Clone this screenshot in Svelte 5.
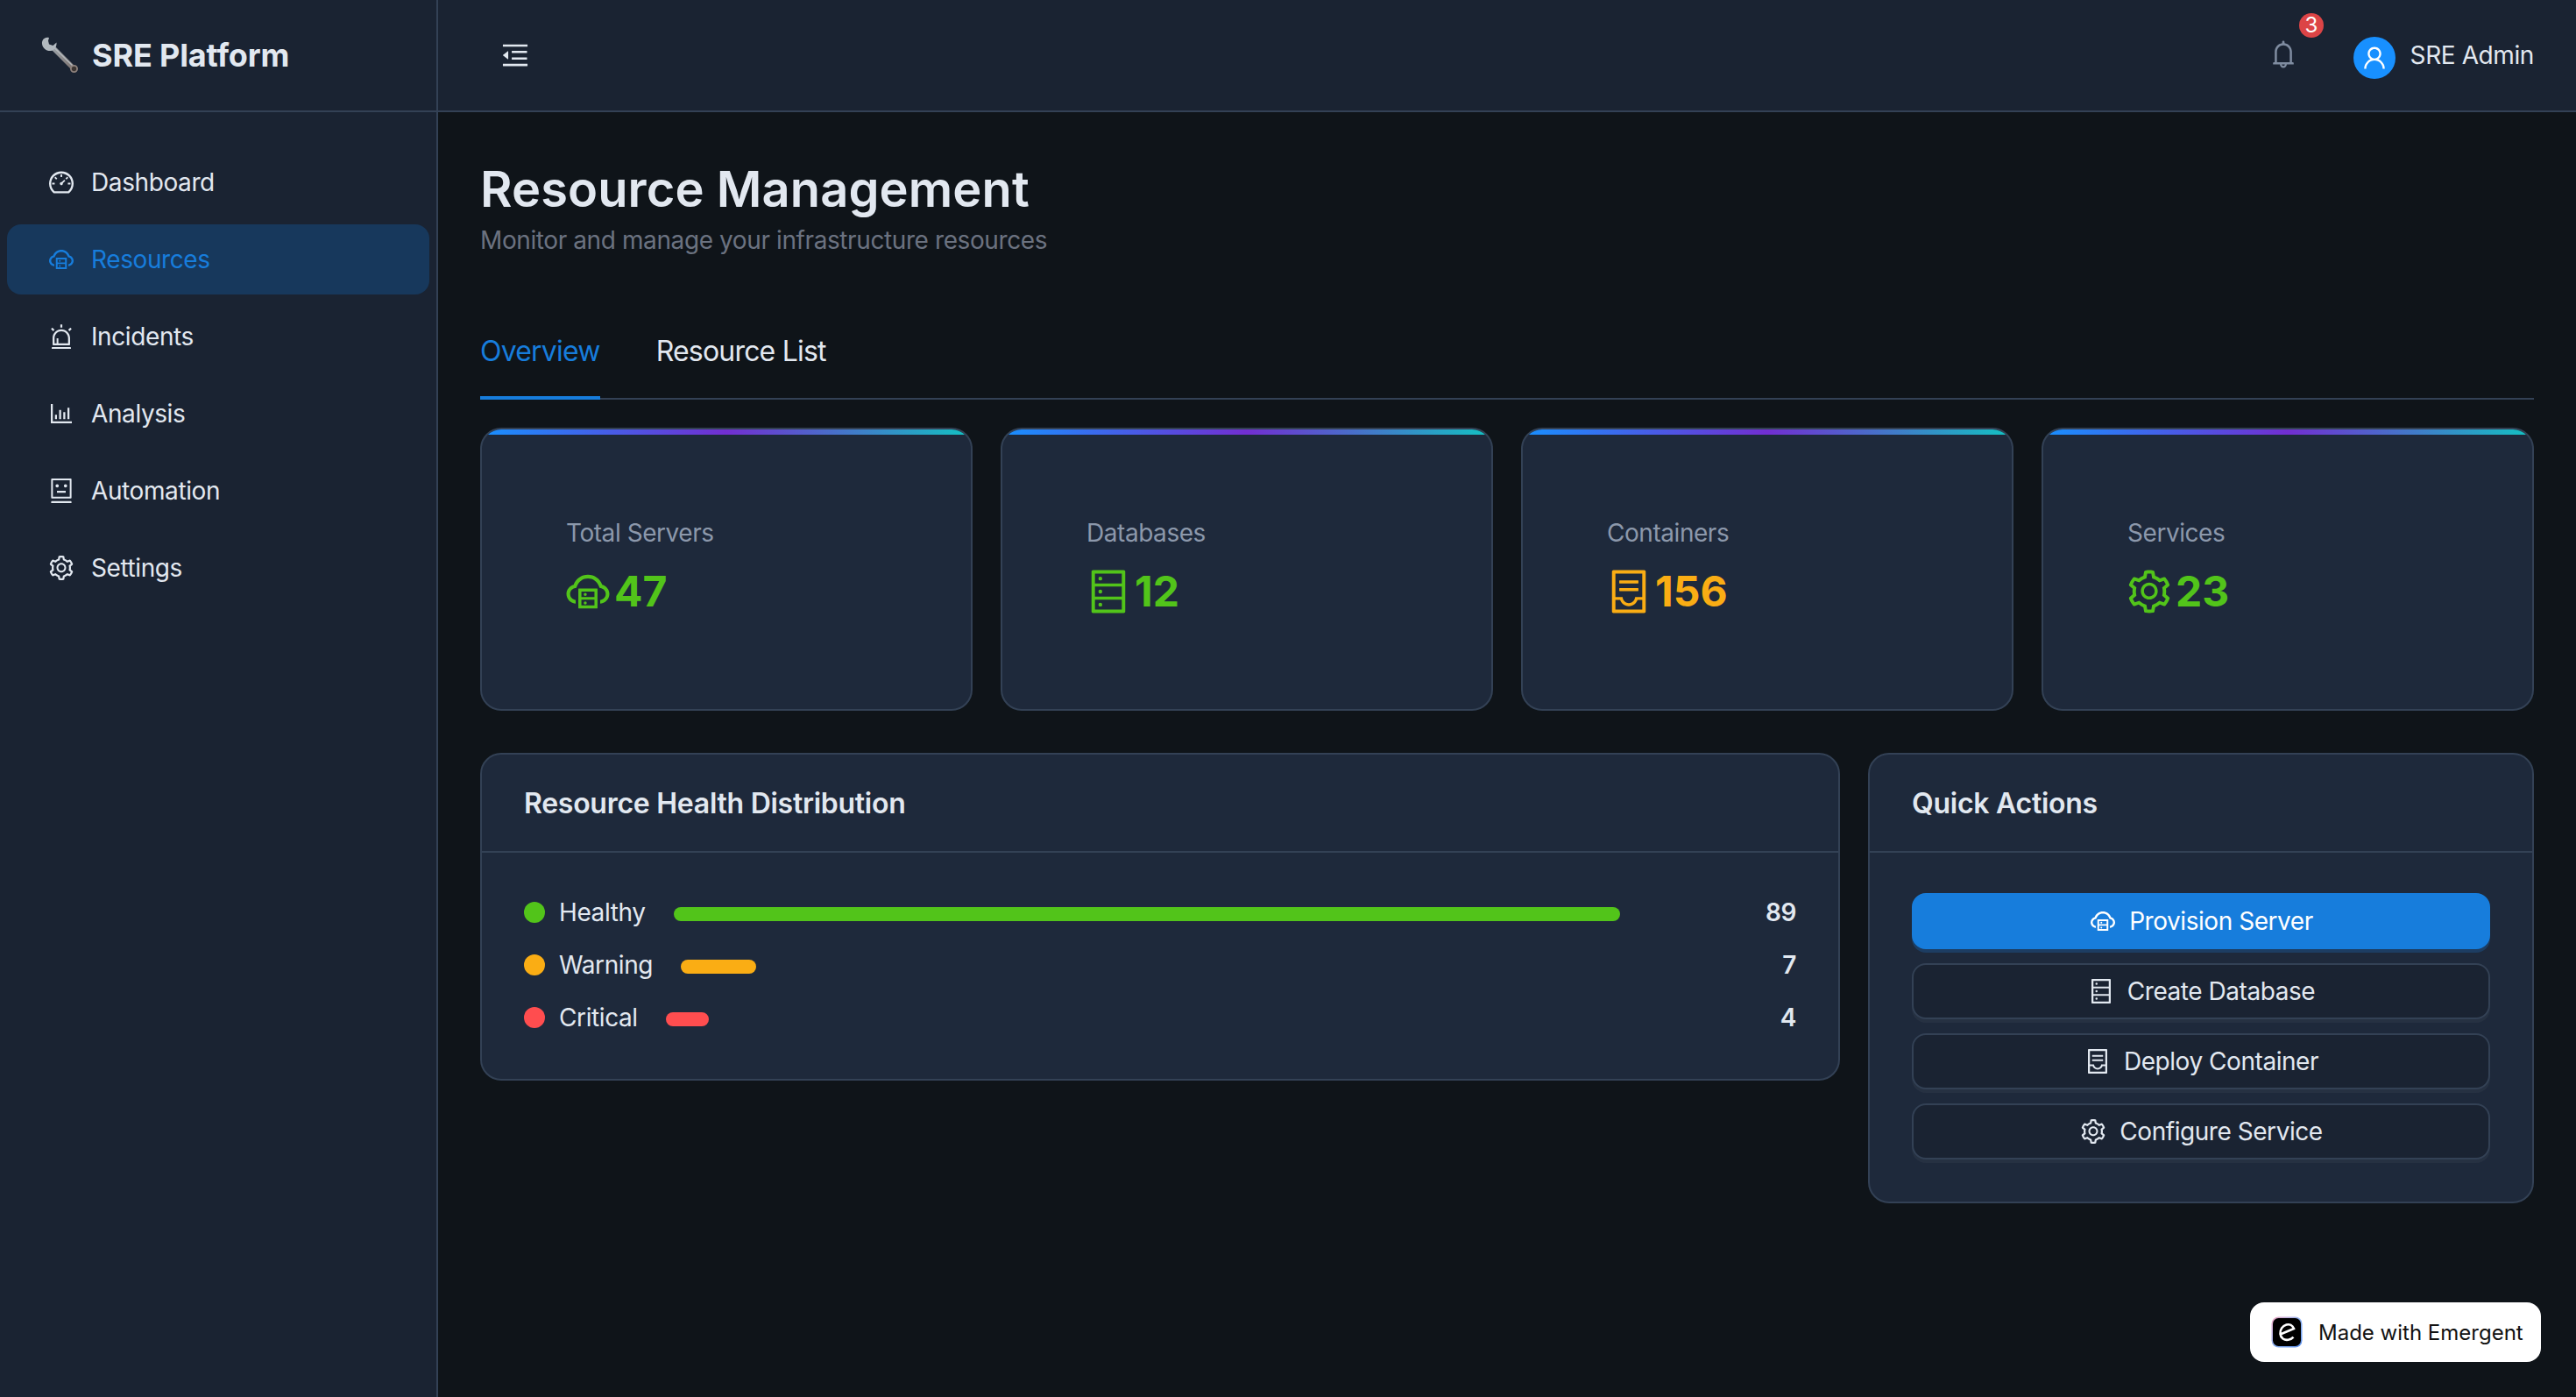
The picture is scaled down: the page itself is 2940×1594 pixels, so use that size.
<script lang="ts">
  const icons: Record<string, string> = {
    dashboard: 'M924.8 385.6a446.7 446.7 0 00-96-142.4 446.7 446.7 0 00-142.4-96C631.1 123.8 572.5 112 512 112s-119.1 11.8-174.4 35.2a446.7 446.7 0 00-142.4 96 446.7 446.7 0 00-96 142.4C75.8 440.9 64 499.5 64 560c0 132.7 58.3 257.7 159.9 343.1l1.7 1.4c5.8 4.8 13.1 7.5 20.6 7.5h531.7c7.5 0 14.8-2.7 20.6-7.5l1.7-1.4C901.7 817.7 960 692.7 960 560c0-60.5-11.9-119.1-35.2-174.4zM761.4 836H262.6A371.12 371.12 0 01140 560c0-99.4 38.7-192.8 109-263 70.3-70.3 163.7-109 263-109 99.4 0 192.8 38.7 263 109 70.3 70.3 109 163.7 109 263 0 105.6-44.5 205.5-122.6 276zM623.5 421.5a8.03 8.03 0 00-11.3 0L527.7 506c-18.7-5-39.4-.2-54.1 14.5a55.95 55.95 0 000 79.2 55.95 55.95 0 0079.2 0 55.87 55.87 0 0014.5-54.1l84.5-84.5c3.1-3.1 3.1-8.2 0-11.3l-28.3-28.3zM490 320h44c4.4 0 8-3.6 8-8v-80c0-4.4-3.6-8-8-8h-44c-4.4 0-8 3.6-8 8v80c0 4.4 3.6 8 8 8zm260 218v44c0 4.4 3.6 8 8 8h80c4.4 0 8-3.6 8-8v-44c0-4.4-3.6-8-8-8h-80c-4.4 0-8 3.6-8 8zm12.7-197.2l-31.1-31.1a8.03 8.03 0 00-11.3 0l-56.6 56.6a8.03 8.03 0 000 11.3l31.1 31.1c3.1 3.1 8.2 3.1 11.3 0l56.6-56.6c3.1-3.1 3.1-8.2 0-11.3zm-458.6-31.1a8.03 8.03 0 00-11.3 0l-31.1 31.1a8.03 8.03 0 000 11.3l56.6 56.6c3.1 3.1 8.2 3.1 11.3 0l31.1-31.1c3.1-3.1 3.1-8.2 0-11.3l-56.6-56.6zM262 530h-80c-4.4 0-8 3.6-8 8v44c0 4.4 3.6 8 8 8h80c4.4 0 8-3.6 8-8v-44c0-4.4-3.6-8-8-8z',
    cloud: 'M704 446H320c-4.4 0-8 3.6-8 8v402c0 4.4 3.6 8 8 8h384c4.4 0 8-3.6 8-8V454c0-4.4-3.6-8-8-8zm-328 64h272v117H376V510zm272 290H376V683h272v117zM424 748a32 32 0 1064 0 32 32 0 10-64 0zm0-178a32 32 0 1064 0 32 32 0 10-64 0zM811.4 368.9C765.6 248 648.9 162 512.2 162S258.8 247.9 213 368.8C126.9 391.5 63.5 470.2 64 563.6 64.6 668 145.6 752.9 247.6 762c4.7.4 8.7-3.3 8.7-8v-60.4c0-4-3-7.4-7-7.9-27-3.4-52.5-15.2-72.1-34.5-24-23.5-37.2-55.1-37.2-88.6 0-28 9.1-54.4 26.2-76.4 16.7-21.4 40.2-36.9 66.1-43.7l37.9-10 13.9-36.7c8.6-22.8 20.6-44.2 35.7-63.5 14.9-19.2 32.6-36 52.4-50 41.1-28.9 89.5-44.2 140-44.2s98.9 15.3 140 44.3c19.9 14 37.5 30.8 52.4 50 15.1 19.3 27.1 40.7 35.7 63.5l13.8 36.6 37.8 10c54.2 14.4 92.1 63.7 92.1 120 0 33.6-13.2 65.1-37.2 88.6-19.5 19.2-44.9 31.1-71.9 34.5-4 .5-6.9 3.9-6.9 7.9V754c0 4.7 4.1 8.4 8.8 8 101.7-9.2 182.5-94 183.2-198.2.6-93.4-62.7-172.1-148.6-194.9z',
    alert: 'M193 796c0 17.7 14.3 32 32 32h574c17.7 0 32-14.3 32-32V563c0-176.2-142.8-319-319-319S193 386.8 193 563v233zm72-233c0-136.4 110.6-247 247-247s247 110.6 247 247v193H404V585c0-5.5-4.5-10-10-10h-44c-5.5 0-10 4.5-10 10v171h-75V563zm-48.1-252.5l39.6-39.6c3.1-3.1 3.1-8.2 0-11.3l-67.9-67.9a8.03 8.03 0 00-11.3 0l-39.6 39.6a8.03 8.03 0 000 11.3l67.9 67.9c3.1 3.1 8.1 3.1 11.3 0zm669.6-79.2l-39.6-39.6a8.03 8.03 0 00-11.3 0l-67.9 67.9a8.03 8.03 0 000 11.3l39.6 39.6c3.1 3.1 8.2 3.1 11.3 0l67.9-67.9c3.1-3.2 3.1-8.2 0-11.3zM832 892H192c-17.7 0-32 14.3-32 32v24c0 4.4 3.6 8 8 8h688c4.4 0 8-3.6 8-8v-24c0-17.7-14.3-32-32-32zM484 180h56c4.4 0 8-3.6 8-8V76c0-4.4-3.6-8-8-8h-56c-4.4 0-8 3.6-8 8v96c0 4.4 3.6 8 8 8z',
    chart: 'M888 792H200V168c0-4.4-3.6-8-8-8h-56c-4.4 0-8 3.6-8 8v688c0 4.4 3.6 8 8 8h752c4.4 0 8-3.6 8-8v-56c0-4.4-3.6-8-8-8zm-600-80h56c4.4 0 8-3.6 8-8V560c0-4.4-3.6-8-8-8h-56c-4.4 0-8 3.6-8 8v144c0 4.4 3.6 8 8 8zm152 0h56c4.4 0 8-3.6 8-8V384c0-4.4-3.6-8-8-8h-56c-4.4 0-8 3.6-8 8v320c0 4.4 3.6 8 8 8zm152 0h56c4.4 0 8-3.6 8-8V462c0-4.4-3.6-8-8-8h-56c-4.4 0-8 3.6-8 8v242c0 4.4 3.6 8 8 8zm152 0h56c4.4 0 8-3.6 8-8V304c0-4.4-3.6-8-8-8h-56c-4.4 0-8 3.6-8 8v400c0 4.4 3.6 8 8 8z',
    robot: 'M300 328a60 60 0 10120 0 60 60 0 10-120 0zM852 64H172c-17.7 0-32 14.3-32 32v660c0 17.7 14.3 32 32 32h680c17.7 0 32-14.3 32-32V96c0-17.7-14.3-32-32-32zm-32 660H204V128h616v596zM604 328a60 60 0 10120 0 60 60 0 10-120 0zm250.2 556H169.8c-16.5 0-29.8 14.3-29.8 32v36c0 4.4 3.3 8 7.4 8h729.1c4.1 0 7.4-3.6 7.4-8v-36c.1-17.7-13.2-32-29.7-32zM664 508H360c-4.4 0-8 3.6-8 8v60c0 4.4 3.6 8 8 8h304c4.4 0 8-3.6 8-8v-60c0-4.4-3.6-8-8-8z',
    setting: 'M924.8 625.7l-65.5-56c3.1-19 4.7-38.4 4.7-57.8s-1.6-38.8-4.7-57.8l65.5-56a32.03 32.03 0 009.3-35.2l-.9-2.6a443.74 443.74 0 00-79.7-137.9l-1.8-2.1a32.12 32.12 0 00-35.1-9.5l-81.3 28.9c-30-24.6-63.5-44-99.7-57.6l-15.7-85a32.05 32.05 0 00-25.8-25.7l-2.7-.5c-52.1-9.4-106.9-9.4-159 0l-2.7.5a32.05 32.05 0 00-25.8 25.7l-15.8 85.4a351.86 351.86 0 00-99 57.4l-81.9-29.1a32 32 0 00-35.1 9.5l-1.8 2.1a446.02 446.02 0 00-79.7 137.9l-.9 2.6c-4.5 12.5-.8 26.5 9.3 35.2l66.3 56.6c-3.1 18.8-4.6 38-4.6 57.1 0 19.2 1.5 38.4 4.6 57.1L99 625.5a32.03 32.03 0 00-9.3 35.2l.9 2.6c18.1 50.4 44.9 96.9 79.7 137.9l1.8 2.1a32.12 32.12 0 0035.1 9.5l81.9-29.1c29.8 24.5 63.1 43.9 99 57.4l15.8 85.4a32.05 32.05 0 0025.8 25.7l2.7.5a449.4 449.4 0 00159 0l2.7-.5a32.05 32.05 0 0025.8-25.7l15.7-85a350 350 0 0099.7-57.6l81.3 28.9a32 32 0 0035.1-9.5l1.8-2.1c34.8-41.1 61.6-87.5 79.7-137.9l.9-2.6c4.5-12.3.8-26.3-9.3-35zM788.3 465.9c2.5 15.1 3.8 30.6 3.8 46.1s-1.3 31-3.8 46.1l-6.6 40.1 74.7 63.9a370.03 370.03 0 01-42.6 73.6L721 702.8l-31.4 25.8c-23.9 19.6-50.5 35-79.3 45.8l-38.1 14.3-17.9 97a377.5 377.5 0 01-85 0l-17.9-97.2-37.8-14.5c-28.5-10.8-55-26.2-78.7-45.7l-31.4-25.9-93.4 33.2c-17-22.9-31.2-47.6-42.6-73.6l75.5-64.5-6.5-40c-2.4-14.9-3.7-30.3-3.7-45.5 0-15.3 1.2-30.6 3.7-45.5l6.5-40-75.5-64.5c11.3-26.1 25.6-50.7 42.6-73.6l93.4 33.2 31.4-25.9c23.7-19.5 50.2-34.9 78.7-45.7l37.9-14.3 17.9-97.2c28.1-3.2 56.8-3.2 85 0l17.9 97 38.1 14.3c28.7 10.8 55.4 26.2 79.3 45.8l31.4 25.8 92.8-32.9c17 22.9 31.2 47.6 42.6 73.6L781.8 426l6.5 39.9zM512 326c-97.2 0-176 78.8-176 176s78.8 176 176 176 176-78.8 176-176-78.8-176-176-176zm79.2 255.2A111.6 111.6 0 01512 614c-29.9 0-58-11.7-79.2-32.8A111.6 111.6 0 01400 502c0-29.9 11.7-58 32.8-79.2C454 401.6 482.1 390 512 390c29.9 0 58 11.6 79.2 32.8A111.6 111.6 0 01624 502c0 29.9-11.7 58-32.8 79.2z',
    database: 'M832 64H192c-17.7 0-32 14.3-32 32v832c0 17.7 14.3 32 32 32h640c17.7 0 32-14.3 32-32V96c0-17.7-14.3-32-32-32zm-600 72h560v208H232V136zm560 480H232V408h560v208zm0 272H232V680h560v208zM304 240a40 40 0 1080 0 40 40 0 10-80 0zm0 272a40 40 0 1080 0 40 40 0 10-80 0zm0 272a40 40 0 1080 0 40 40 0 10-80 0z',
    container: 'M832 64H192c-17.7 0-32 14.3-32 32v832c0 17.7 14.3 32 32 32h640c17.7 0 32-14.3 32-32V96c0-17.7-14.3-32-32-32zm-40 824H232V687h97.9c11.6 32.8 32 62.3 59.1 84.7 34.5 28.5 78.2 44.3 123 44.3s88.5-15.7 123-44.3c27.1-22.4 47.5-51.9 59.1-84.7H792v-63H643.6l-5.2 24.7C626.4 708.5 573.2 752 512 752s-114.4-43.5-126.5-103.3l-5.2-24.7H232V136h560v752zM320 341h384c4.4 0 8-3.6 8-8v-48c0-4.4-3.6-8-8-8H320c-4.4 0-8 3.6-8 8v48c0 4.4 3.6 8 8 8zm0 160h384c4.4 0 8-3.6 8-8v-48c0-4.4-3.6-8-8-8H320c-4.4 0-8 3.6-8 8v48c0 4.4 3.6 8 8 8z',
    fold: 'M408 442h480c4.4 0 8-3.6 8-8v-56c0-4.4-3.6-8-8-8H408c-4.4 0-8 3.6-8 8v56c0 4.4 3.6 8 8 8zm-8 204c0 4.4 3.6 8 8 8h480c4.4 0 8-3.6 8-8v-56c0-4.4-3.6-8-8-8H408c-4.4 0-8 3.6-8 8v56zm504-486H120c-4.4 0-8 3.6-8 8v56c0 4.4 3.6 8 8 8h784c4.4 0 8-3.6 8-8v-56c0-4.4-3.6-8-8-8zm0 632H120c-4.4 0-8 3.6-8 8v56c0 4.4 3.6 8 8 8h784c4.4 0 8-3.6 8-8v-56c0-4.4-3.6-8-8-8zM115.4 518.9L271.7 642c5.8 4.6 14.4.5 14.4-6.9V388.9c0-7.4-8.5-11.5-14.4-6.9L115.4 505.1a8.74 8.74 0 000 13.8z',
    bell: 'M816 768h-24V428c0-141.1-104.3-257.7-240-277.1V112c0-22.1-17.9-40-40-40s-40 17.9-40 40v38.9c-135.7 19.4-240 136-240 277.1v340h-24c-17.7 0-32 14.3-32 32v32c0 4.4 3.6 8 8 8h216c0 61.8 50.2 112 112 112s112-50.2 112-112h216c4.4 0 8-3.6 8-8v-32c0-17.7-14.3-32-32-32zM512 888c-26.5 0-48-21.5-48-48h96c0 26.5-21.5 48-48 48zM304 768V428c0-55.6 21.6-107.8 60.9-147.1S456.4 220 512 220c55.6 0 107.8 21.6 147.1 60.9S720 372.4 720 428v340H304z',
    user: 'M858.5 763.6a374 374 0 00-80.6-119.5 375.63 375.63 0 00-119.5-80.6c-.4-.2-.8-.3-1.2-.5C719.5 518 760 444.7 760 362c0-137-111-248-248-248S264 225 264 362c0 82.7 40.5 156 102.8 201.1-.4.2-.8.3-1.2.5-44.8 18.9-85 46-119.5 80.6a375.63 375.63 0 00-80.6 119.5A371.7 371.7 0 00136 901.8a8 8 0 008 8.2h60c4.4 0 7.9-3.5 8-7.8 2-77.2 33-149.5 87.8-204.3 56.7-56.7 132-87.9 212.2-87.9s155.5 31.2 212.2 87.9C779 752.7 810 825 812 902.2c.1 4.4 3.6 7.8 8 7.8h60a8 8 0 008-8.2c-1-47.8-10.9-94.3-29.5-138.2zM512 534c-45.9 0-89.1-17.9-121.6-50.4S340 407.9 340 362c0-45.9 17.9-89.1 50.4-121.6S466.1 190 512 190s89.1 17.9 121.6 50.4S684 316.1 684 362c0 45.9-17.9 89.1-50.4 121.6S557.9 534 512 534z'
  };

  const navItems = [
    { label: 'Dashboard', icon: 'dashboard' },
    { label: 'Resources', icon: 'cloud', active: true },
    { label: 'Incidents', icon: 'alert' },
    { label: 'Analysis', icon: 'chart' },
    { label: 'Automation', icon: 'robot' },
    { label: 'Settings', icon: 'setting' }
  ];

  const stats = [
    { label: 'Total Servers', value: 47, icon: 'cloud', color: '#52c41a' },
    { label: 'Databases', value: 12, icon: 'database', color: '#52c41a' },
    { label: 'Containers', value: 156, icon: 'container', color: '#faad14' },
    { label: 'Services', value: 23, icon: 'setting', color: '#52c41a' }
  ];

  const health = [
    { label: 'Healthy', value: 89, color: '#52c41a' },
    { label: 'Warning', value: 7, color: '#faad14' },
    { label: 'Critical', value: 4, color: '#ff4d4f' }
  ];

  const actions = [
    { label: 'Provision Server', icon: 'cloud', primary: true },
    { label: 'Create Database', icon: 'database' },
    { label: 'Deploy Container', icon: 'container' },
    { label: 'Configure Service', icon: 'setting' }
  ];
</script>

{#snippet icon(name: string, size: number)}
  <svg class="icon" viewBox="0 0 1024 1024" width={size} height={size} fill="currentColor" aria-hidden="true">
    <path d={icons[name]} />
  </svg>
{/snippet}

<div class="layout">
  <aside class="sidebar">
    <div class="logo">
      <svg class="wrench" viewBox="0 0 56 56" width="56" height="56" aria-hidden="true">
        <defs>
          <linearGradient id="shaft" x1="0" y1="0" x2="1" y2="1">
            <stop offset="0" stop-color="#9aa0a6" />
            <stop offset="1" stop-color="#7d7370" />
          </linearGradient>
        </defs>
        <path d="M21 20 L44 43" stroke="url(#shaft)" stroke-width="5.6" stroke-linecap="round" />
        <path d="M22 19.4 L44 41" stroke="#b4b9bd" stroke-width="1.4" stroke-linecap="round" />
        <path d="M16 8 C10.5 6.5 7.5 11 8 15 C8.5 20 13 23.5 18 23 C22 22.5 25 18.5 24.5 13.5 L20.5 17 L16 15.5 L15 11.5 Z" fill="#b2b9bf" />
        <circle cx="44.5" cy="43.5" r="3.6" fill="#3c3532" stroke="#8d817c" stroke-width="1.8" />
      </svg>
      <span>SRE Platform</span>
    </div>
    <nav class="menu">
      {#each navItems as item}
        <a class="menu-item" class:active={item.active} href="#top">
          {@render icon(item.icon, 32)}
          <span>{item.label}</span>
        </a>
      {/each}
    </nav>
  </aside>

  <div class="main">
    <header class="topbar">
      <button class="trigger" type="button" aria-label="Collapse menu">
        {@render icon('fold', 36)}
      </button>
      <div class="topbar-right">
        <div class="bell">
          {@render icon('bell', 36)}
          <span class="badge">3</span>
        </div>
        <div class="user">
          <span class="avatar">{@render icon('user', 32)}</span>
          <span>SRE Admin</span>
        </div>
      </div>
    </header>

    <main class="content">
      <h1>Resource Management</h1>
      <p class="subtitle">Monitor and manage your infrastructure resources</p>

      <div class="tabs">
        <span class="tab current">Overview</span>
        <span class="tab">Resource List</span>
      </div>

      <section class="stat-grid">
        {#each stats as stat}
          <article class="stat-card">
            <div class="stat-label">{stat.label}</div>
            <div class="stat-value" style:color={stat.color}>
              {@render icon(stat.icon, 56)}
              <span>{stat.value}</span>
            </div>
          </article>
        {/each}
      </section>

      <section class="lower">
        <article class="panel">
          <h2 class="panel-head">Resource Health Distribution</h2>
          <div class="health-body">
            {#each health as row}
              <div class="health-row">
                <div class="health-name">
                  <span class="dot" style:background={row.color}></span>
                  <span>{row.label}</span>
                </div>
                <div class="track">
                  <div class="fill" style:width="{row.value}%" style:background={row.color}></div>
                </div>
                <strong>{row.value}</strong>
              </div>
            {/each}
          </div>
        </article>

        <article class="panel">
          <h2 class="panel-head">Quick Actions</h2>
          <div class="action-body">
            {#each actions as action}
              <button class="action" class:primary={action.primary} type="button">
                {@render icon(action.icon, 32)}
                <span>{action.label}</span>
              </button>
            {/each}
          </div>
        </article>
      </section>
    </main>
  </div>
</div>

<div class="made-with">
  <svg class="emergent" viewBox="0 0 36 36" width="36" height="36" aria-hidden="true">
    <defs>
      <linearGradient id="edge" x1="0" y1="0" x2="1" y2="1">
        <stop offset="0" stop-color="#f3a6c0" />
        <stop offset="0.5" stop-color="#8fb4f2" />
        <stop offset="1" stop-color="#5f93ee" />
      </linearGradient>
    </defs>
    <rect x="0.5" y="0.5" width="35" height="35" rx="8" fill="url(#edge)" />
    <rect x="2" y="2" width="32" height="32" rx="6.5" fill="#000" />
    <path d="M10.5 20.5 L26 14 C24.5 10 21 8.5 17.5 9.5 C13 10.8 10 15 10.5 20 C11 25 15 27.5 19.5 26.8 C22 26.4 24 25.3 25.5 23.6" fill="none" stroke="#fff" stroke-width="2.6" />
  </svg>
  <span>Made with Emergent</span>
</div>

<style>
  :global(body) {
    margin: 0;
    background: #0f1419;
    font-family: Inter, 'Noto Sans', sans-serif;
  }

  .layout {
    display: flex;
    min-height: 1594px;
    color: #e2e8f0;
    letter-spacing: -0.4px;
  }

  .icon {
    display: block;
    flex: 0 0 auto;
  }

  .sidebar {
    flex: 0 0 500px;
    box-sizing: border-box;
    background: #1a2332;
    border-right: 2px solid #334155;
  }

  .logo {
    display: flex;
    align-items: center;
    gap: 9px;
    box-sizing: border-box;
    height: 128px;
    padding-left: 40px;
    border-bottom: 2px solid #334155;
    font-size: 36px;
    font-weight: 700;
    letter-spacing: -0.15px;
  }

  .menu {
    display: flex;
    flex-direction: column;
    gap: 8px;
    padding: 40px 8px 0;
  }

  .menu-item {
    display: flex;
    align-items: center;
    gap: 18px;
    height: 80px;
    padding-left: 46px;
    border-radius: 16px;
    color: #e2e8f0;
    font-size: 28px;
    text-decoration: none;
  }

  .menu-item.active {
    background: #17385c;
    color: #177ddc;
  }

  .main {
    flex: 1;
    min-width: 0;
  }

  .topbar {
    display: flex;
    align-items: center;
    justify-content: space-between;
    box-sizing: border-box;
    height: 128px;
    padding: 0 48px 0 70px;
    background: #1a2332;
    border-bottom: 2px solid #334155;
  }

  .trigger {
    padding: 0;
    border: 0;
    background: none;
    color: #e2e8f0;
  }

  .topbar-right {
    display: flex;
    align-items: center;
    gap: 62px;
  }

  .bell {
    position: relative;
    margin-bottom: 2px;
    color: #7f8ca0;
  }

  .badge {
    position: absolute;
    top: -29px;
    left: 36px;
    width: 28px;
    height: 28px;
    border-radius: 50%;
    background: #dc4446;
    color: #fff;
    font-size: 24px;
    line-height: 28px;
    text-align: center;
  }

  .user {
    display: flex;
    align-items: center;
    gap: 17px;
    font-size: 28px;
  }

  .avatar {
    display: flex;
    align-items: center;
    justify-content: center;
    width: 48px;
    height: 48px;
    margin-top: 6px;
    border-radius: 50%;
    background: #1890ff;
    color: #fff;
  }

  .content {
    padding: 48px;
  }

  h1 {
    margin: 0;
    font-size: 56px;
    font-weight: 600;
    line-height: 80px;
    letter-spacing: 0.1px;
  }

  .subtitle {
    margin: -4px 0 0;
    color: #6b7280;
    font-size: 28px;
    line-height: 44px;
  }

  .tabs {
    display: flex;
    gap: 64px;
    margin-top: 61px;
    border-bottom: 2px solid #334155;
  }

  .tab {
    margin-bottom: -2px;
    padding: 24px 0 31px;
    border-bottom: 4px solid transparent;
    color: #e2e8f0;
    font-size: 32px;
    line-height: 40px;
    letter-spacing: -0.8px;
  }

  .tab.current {
    color: #177ddc;
    border-bottom-color: #177ddc;
  }

  .stat-grid {
    display: grid;
    grid-template-columns: repeat(4, 1fr);
    gap: 32px;
    margin-top: 32px;
  }

  .stat-card {
    position: relative;
    box-sizing: border-box;
    height: 323px;
    padding: 96px 0 0 96px;
    overflow: hidden;
    background: #1e293b;
    border: 2px solid #334155;
    border-radius: 24px;
  }

  .stat-card::before {
    content: '';
    position: absolute;
    top: 0;
    left: 0;
    right: 0;
    height: 6px;
    background: linear-gradient(90deg, #1890ff, #722ed1, #13c2c2);
  }

  .stat-label {
    color: #8c98ab;
    font-size: 28px;
    line-height: 44px;
    letter-spacing: -0.45px;
  }

  .stat-value {
    display: flex;
    align-items: center;
    gap: 2px;
    margin: 17px 0 0 -3px;
    font-size: 48px;
    font-weight: 700;
    line-height: 56px;
    letter-spacing: 0;
  }

  .lower {
    display: grid;
    grid-template-columns: 1552px 760px;
    gap: 32px;
    align-items: start;
    margin-top: 48px;
  }

  .panel {
    background: #1e293b;
    border: 2px solid #334155;
    border-radius: 24px;
  }

  .panel-head {
    box-sizing: border-box;
    height: 112px;
    margin: 0;
    padding: 0 48px;
    border-bottom: 2px solid #334155;
    font-size: 32px;
    font-weight: 600;
    line-height: 112px;
    letter-spacing: -0.27px;
  }

  .health-body {
    display: flex;
    flex-direction: column;
    gap: 16px;
    padding: 46px 48px 48px;
  }

  .health-row {
    display: flex;
    align-items: center;
    gap: 32px;
    height: 44px;
    font-size: 28px;
  }

  .health-row strong {
    font-weight: 600;
  }

  .health-name {
    display: flex;
    align-items: center;
    gap: 16px;
  }

  .dot {
    width: 24px;
    height: 24px;
    border-radius: 50%;
  }

  .track {
    flex: 1;
    margin-top: 4px;
  }

  .fill {
    height: 16px;
    border-radius: 8px;
  }

  .action-body {
    display: flex;
    flex-direction: column;
    gap: 16px;
    padding: 46px 48px 48px;
  }

  .action {
    display: flex;
    align-items: center;
    justify-content: center;
    gap: 14px;
    box-sizing: border-box;
    height: 64px;
    border: 2px solid #334155;
    border-radius: 16px;
    background: #1a2332;
    box-shadow: 0 4px 0 rgba(255, 255, 255, 0.04);
    color: #e2e8f0;
    font-family: inherit;
    font-size: 28px;
    letter-spacing: -0.45px;
  }

  .action.primary {
    border-color: #177ddc;
    background: #177ddc;
    box-shadow: 0 4px 0 rgba(24, 144, 255, 0.2);
    color: #fff;
  }

  .made-with {
    position: fixed;
    right: 40px;
    bottom: 40px;
    display: flex;
    align-items: center;
    gap: 18px;
    box-sizing: border-box;
    width: 332px;
    height: 68px;
    padding-left: 24px;
    border-radius: 16px;
    background: #fff;
    color: #111;
    font-size: 24px;
    white-space: nowrap;
  }
</style>
